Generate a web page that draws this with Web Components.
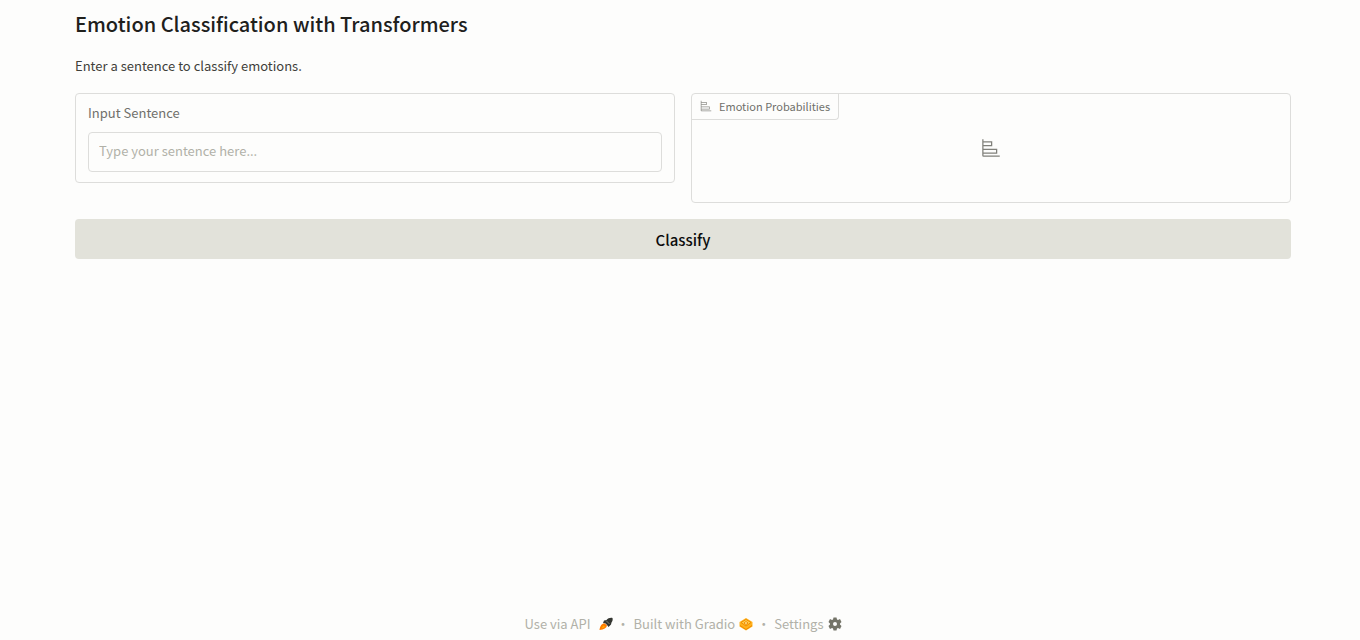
<!DOCTYPE html>
<html lang="en">
<head>
<meta charset="utf-8">
<title>Emotion Classification with Transformers</title>
<style>
html, body { margin: 0; background: #fdfdfc; }
body { --line: #dddddb; --muted: #b1b1a8; --label: #70706b; font-family: "Noto Sans CJK SC", "Noto Sans", sans-serif; font-size: 13px; line-height: 20px; color: #3f3f3a; }
</style>
</head>
<body>
<emotion-app></emotion-app>
<script>
const define = (name, html) => customElements.define(name, class extends HTMLElement {
  constructor() {
    super();
    this.attachShadow({ mode: 'open' }).innerHTML = html;
  }
});

define('bar-icon', `
<style>:host { display: block; width: 12px; height: 12px; } svg { display: block; width: 100%; height: 100%; }</style>
<svg viewBox="0 0 32 32" fill="currentColor" aria-hidden="true"><path d="M4 2H2v26a2 2 0 0 0 2 2h26v-2H4v-3h22v-8H4v-4h14V5H4Zm20 17v4H4v-4ZM16 7v4H4V7Z"/></svg>`);

define('text-field', `
<style>
:host { display: block; box-sizing: border-box; border: 1px solid var(--line); border-radius: 4px; padding: 9px 12px 10px; }
label { display: block; margin-bottom: 9px; color: var(--label); }
input { display: block; box-sizing: border-box; width: 100%; height: 40px; margin: 0; padding: 0 10px 4px; border: 1px solid var(--line); border-radius: 4px; background: transparent; font: inherit; color: #27271f; outline: none; }
input::placeholder { color: var(--muted); opacity: 1; }
</style>
<label for="sentence"><slot></slot></label>
<input id="sentence" type="text" placeholder="Type your sentence here...">`);

define('result-panel', `
<style>
:host { display: flex; flex-direction: column; box-sizing: border-box; height: 110px; border: 1px solid var(--line); border-radius: 4px; color: var(--label); }
.label { display: flex; align-items: center; align-self: flex-start; box-sizing: border-box; height: 26px; padding: 0 8px 2px; gap: 7px; border: solid var(--line); border-width: 0 1px 1px 0; border-radius: 0 0 4px 0; font-size: 11px; }
.label bar-icon { color: #90908a; }
.empty { flex: 1; display: flex; justify-content: center; padding-top: 18px; }
.empty bar-icon { width: 20px; height: 20px; color: #80807a; }
</style>
<div class="label"><bar-icon></bar-icon><slot></slot></div>
<div class="empty"><bar-icon></bar-icon></div>`);

define('action-button', `
<style>
:host { display: block; }
button { display: block; width: 100%; height: 40px; padding: 1px 0 0; border: 0; border-radius: 4px; background: #e2e2da; color: #0c0c0c; font: inherit; font-size: 15px; font-weight: 500; cursor: pointer; }
</style>
<button type="button"><slot></slot></button>`);

define('app-footer', `
<style>
:host { display: flex; justify-content: center; align-items: center; gap: 4px; color: var(--muted); }
a, button { display: flex; align-items: center; gap: 4px; padding: 0; border: 0; background: none; color: inherit; font: inherit; text-decoration: none; cursor: pointer; }
button.api { gap: 8px; }
svg { display: block; width: 14px; height: 14px; }
</style>
<button type="button" class="api">Use via API
<svg viewBox="0 0 28 28" aria-hidden="true"><path d="M27 2c-5-1-9 1-12 4l-5 1-2 5 5 1 3 3 3 4 5-5 1-4c2-3 3-5 2-9Z" fill="#343631"/><path d="m14 7 7 7" stroke="#80847b" stroke-width="2"/><path d="M12 13c-6-1-10 4-11 13 9-1 14-4 15-9Z" fill="#ff7c00"/><path d="m9 17-4 6 7-3Z" fill="#ffb300"/></svg></button>
<span>·</span>
<a href="#gradio">Built with Gradio
<svg viewBox="0 0 28 28" aria-hidden="true"><path d="M14 2 1 10v9l13 8 13-8v-9Z" fill="#ffb21c"/><path d="m14 5 10 6-10 7-10-7Z" fill="#ffd04a" stroke="#f28a00" stroke-width="2"/><path d="m14 9 4 3-4 3-4-3Z" fill="#fff0a8" stroke="#f28a00" stroke-width="2"/><path d="m2 17 12 8 12-8" fill="none" stroke="#f28a00" stroke-width="2"/></svg></a>
<span>·</span>
<button type="button">Settings
<svg viewBox="0 0 28 28" aria-hidden="true"><path fill-rule="evenodd" fill="#747468" d="M11 1h6l1 4 2 1 4-2 3 6-3 3v2l3 3-3 6-4-2-2 1-1 4h-6l-1-4-2-1-4 2-3-6 3-3v-2l-3-3 3-6 4 2 2-1Zm3 9a4 4 0 1 0 0 8 4 4 0 0 0 0-8Z"/></svg></button>`);

define('emotion-app', `
<style>
:host { display: flex; flex-direction: column; box-sizing: border-box; min-height: 100vh; padding: 9px 69px 6px 75px; }
main { flex: 1; }
h1 { margin: 0; font-size: 20px; line-height: 30px; font-weight: 500; color: #20201c; }
p { margin: 17px 0; }
.row { display: grid; grid-template-columns: 1fr 1fr; gap: 16px; align-items: start; margin-bottom: 16px; }
</style>
<main>
<h1>Emotion Classification with Transformers</h1>
<p>Enter a sentence to classify emotions.</p>
<div class="row"><text-field>Input Sentence</text-field><result-panel>Emotion Probabilities</result-panel></div>
<action-button>Classify</action-button>
</main>
<app-footer role="contentinfo"></app-footer>`);
</script>
</body>
</html>
